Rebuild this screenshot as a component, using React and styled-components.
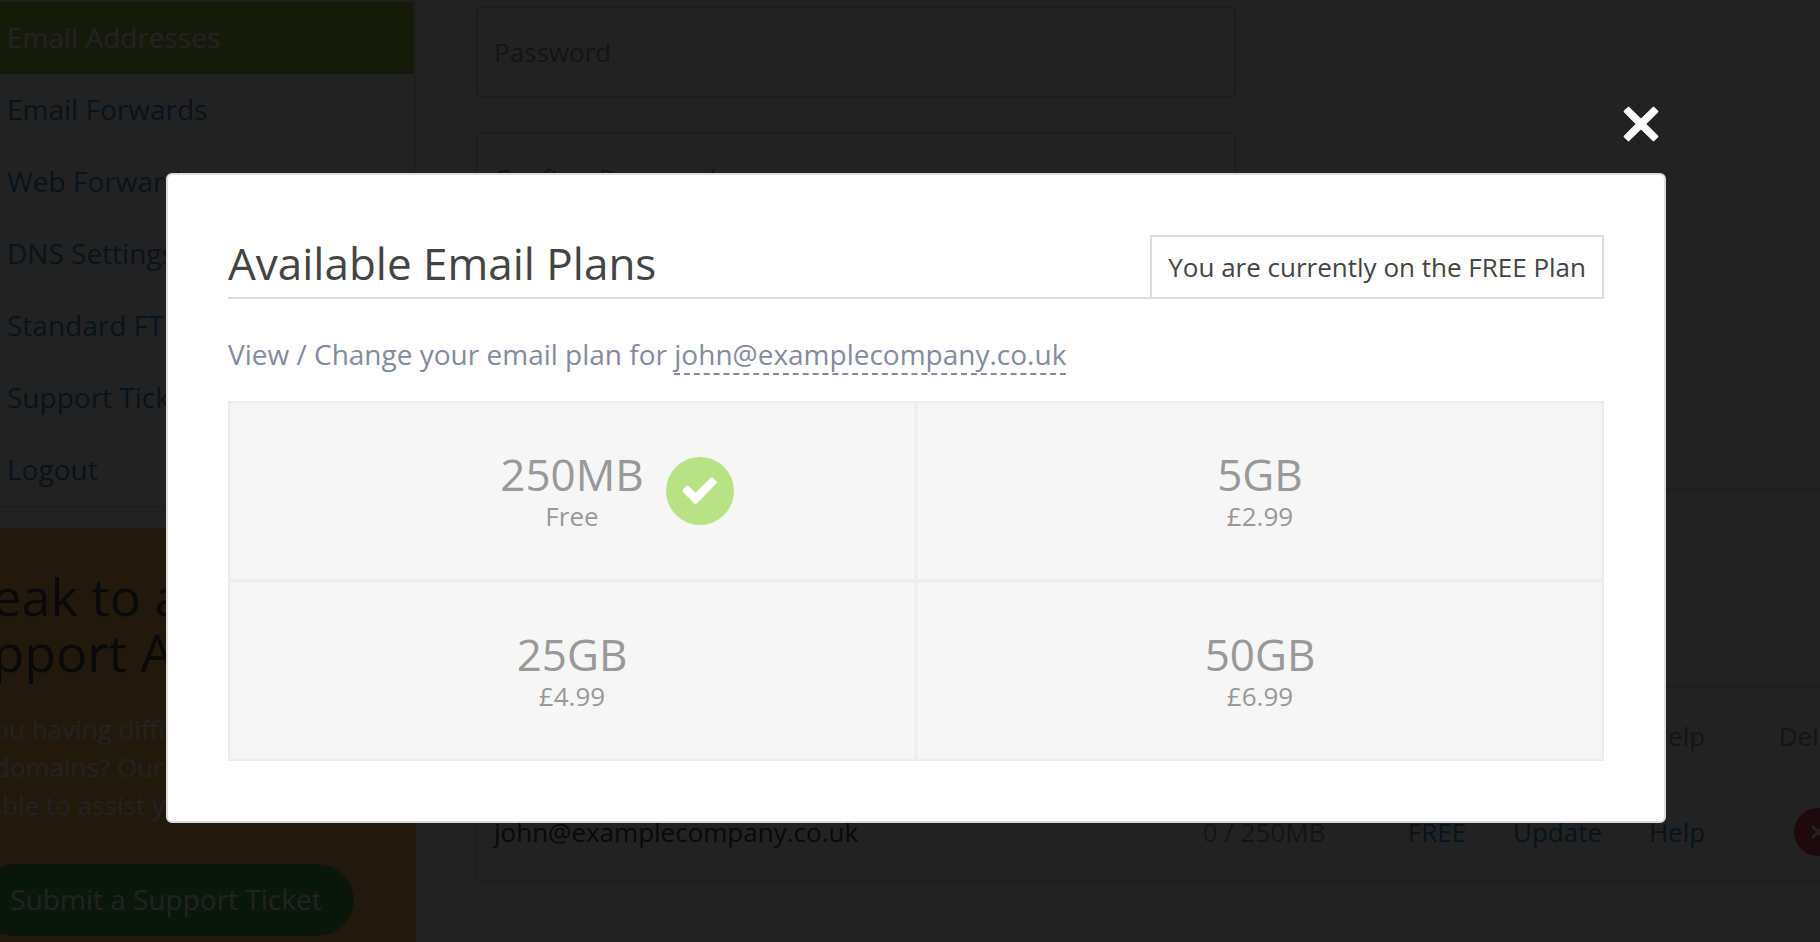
import React from "react";
import styled, { createGlobalStyle } from "styled-components";

const GlobalStyle = createGlobalStyle`
  *, *::before, *::after { box-sizing: border-box; }
  html, body { margin: 0; height: 100%; overflow: hidden; }
  body {
    background: #fff;
    color: #444;
    font-family: "Open Sans", "Noto Sans", sans-serif;
    font-size: 26px;
    line-height: 38px;
  }
  a { color: inherit; text-decoration: none; }
  button, input { font: inherit; }
`;

const Page = styled.div`
  display: flex;
  gap: 60px;
  margin: 0 -81px 0 -86px;
`;

const Sidebar = styled.aside`
  flex: 0 0 502px;
`;

const SideNav = styled.nav`
  margin-bottom: 20px;
  border: 2px solid #e6e6e6;
  border-left: 0;
`;

const NavLink = styled.a`
  display: block;
  padding: 16px 16px 18px 93px;
  font-size: 28px;
  color: ${(p) => (p.$active ? "#fff" : "#3c8cc4")};
  background: ${(p) => (p.$active ? "#a8c456" : "transparent")};
`;

const SupportCard = styled.section`
  display: flex;
  flex-direction: column;
  padding: 40px 16px 6px 18px;
  background: #febb61;
`;

const SupportTitle = styled.h2`
  margin: 0 0 30px;
  font-size: 52px;
  line-height: 56px;
  font-weight: 400;
`;

const SupportText = styled.p`
  margin: 0 0 40px;
  color: #fff;
`;

const TicketButton = styled.button`
  align-self: center;
  padding: 16px 32px 18px;
  border: 0;
  border-radius: 36px;
  background: #52ac4b;
  color: #fff;
  font-size: 28px;
  white-space: nowrap;
`;

const Main = styled.main`
  flex: 1;
  min-width: 0;
`;

const Form = styled.form`
  display: flex;
  flex-direction: column;
  gap: 34px;
  max-width: 760px;
  padding: 6px 0 264px;
`;

const Field = styled.input`
  width: 100%;
  height: 92px;
  padding: 0 16px;
  border: 2px solid #ddd;
  border-radius: 6px;
  background: #fff;
  &::placeholder { color: #999; opacity: 1; }
`;

const Divider = styled.hr`
  margin: 0 0 196px;
  border: 0;
  border-top: 2px solid #e6e6e6;
`;

const Mailboxes = styled.table`
  width: 100%;
  table-layout: fixed;
  border-collapse: collapse;
  border: 2px solid #e6e6e6;
  th, td {
    height: 97px;
    padding: 0 16px;
    font-weight: 400;
    text-align: center;
    white-space: nowrap;
  }
  th { background: #fafafa; color: #999; }
  th:first-child, td:first-child { text-align: left; }
`;

const Col = styled.col`
  width: ${(p) => p.$w};
`;

const Muted = styled.span`
  color: #999;
`;

const CellLink = styled.a`
  && { color: #3c8cc4; }
`;

const DeleteButton = styled.button`
  display: inline-flex;
  align-items: center;
  justify-content: center;
  width: 48px;
  height: 48px;
  padding: 0;
  border: 0;
  border-radius: 50%;
  background: #d14b70;
  vertical-align: middle;
`;

const Overlay = styled.div`
  position: fixed;
  inset: 0;
  display: flex;
  flex-direction: column;
  align-items: stretch;
  padding: 106px 154px 0 166px;
  background: rgba(0, 0, 0, 0.866);
`;

const CloseButton = styled.button`
  display: flex;
  align-self: flex-end;
  margin: 0 7px 31px 0;
  padding: 0;
  border: 0;
  background: none;
`;

const Dialog = styled.div`
  padding: 60px;
  border: 2px solid #ddd;
  border-radius: 6px;
  background: #fff;
`;

const DialogHeader = styled.header`
  display: flex;
  justify-content: space-between;
  height: 64px;
  border-bottom: 2px solid #ddd;
`;

const DialogTitle = styled.h1`
  margin: 0;
  font-size: 44px;
  line-height: 56px;
  font-weight: 400;
`;

const CurrentPlan = styled.div`
  height: 64px;
  padding: 11px 16px;
  border: 2px solid #ddd;
`;

const Intro = styled.p`
  margin: 36px 0 28px;
  font-size: 28px;
  color: #858b9e;
`;

const Account = styled.span`
  border-bottom: 2px dashed #858b9e;
`;

const PlanGrid = styled.div`
  display: grid;
  grid-template-columns: 1fr 1fr;
`;

const PlanButton = styled.button`
  display: flex;
  align-items: center;
  justify-content: center;
  height: 180px;
  padding: 0;
  border: 2px solid #eee;
  background: #f6f6f6;
  color: #999;
`;

const PlanLabel = styled.span`
  position: relative;
  display: flex;
  flex-direction: column;
  align-items: center;
  padding-top: 4px;
`;

const PlanSize = styled.span`
  font-size: 44px;
  line-height: 46px;
`;

const Tick = styled.span`
  position: absolute;
  top: 50%;
  left: 100%;
  display: flex;
  align-items: center;
  justify-content: center;
  width: 68px;
  height: 68px;
  margin: -34px 0 0 22px;
  border-radius: 50%;
  background: #b8e283;
`;

const navItems = [
  "Email Addresses",
  "Email Forwards",
  "Web Forwards",
  "DNS Settings",
  "Standard FTP",
  "Support Tickets",
  "Logout",
];

const plans = [
  { size: "250MB", price: "Free", current: true },
  { size: "5GB", price: "£2.99" },
  { size: "25GB", price: "£4.99" },
  { size: "50GB", price: "£6.99" },
];

const CrossIcon = ({ size, color }) => (
  <svg width={size} height={size} viewBox="0 0 36 36" aria-hidden="true">
    <path
      d="M6.2.9 18 12.6 29.800.9Q30.500.3 31.200.9L35.100 4.800Q35.700 5.500 35.100 6.200L23.400 18 35.100 29.800Q35.700 30.500 35.100 31.200L31.200 35.100Q30.500 35.700 29.800 35.100L18 23.400 6.200 35.100Q5.500 35.700 4.800 35.100L.9 31.200Q.3 30.500.9 29.800L12.600 18 .9 6.200Q.3 5.500.9 4.800L4.800.9Q5.500.3 6.200.9Z"
      fill={color}
    />
  </svg>
);

const TickIcon = () => (
  <svg width="36" height="28" viewBox="0 0 36 28" aria-hidden="true">
    <path
      d="M1.100 12.300 4.300 9.200Q5.500 8.200 6.700 9.200L13.500 15.800 28.600 1.100Q29.900 0 31.200 1.100L34.400 4.200Q35.400 5.300 34.400 6.500L14.800 26.400Q13.500 27.500 12.200 26.400L1.100 15.200Q0 13.800 1.100 12.300Z"
      fill="#fff"
    />
  </svg>
);

export default function App() {
  return (
    <>
      <GlobalStyle />
      <Page>
        <Sidebar>
          <SideNav>
            {navItems.map((item, i) => (
              <NavLink key={item} href="#" $active={i === 0}>
                {item}
              </NavLink>
            ))}
          </SideNav>
          <SupportCard>
            <SupportTitle>
              Speak to a
              <br />
              Support Agent
            </SupportTitle>
            <SupportText>
              Are you having difficulties with
              <br />
              your domains? Our support team
              <br />
              also able to assist you
            </SupportText>
            <TicketButton type="button">Submit a Support Ticket</TicketButton>
          </SupportCard>
        </Sidebar>
        <Main>
          <Form>
            <Field type="password" placeholder="Password" aria-label="Password" />
            <Field type="password" placeholder="Confirm Password" aria-label="Confirm Password" />
          </Form>
          <Divider />
          <Mailboxes>
            <colgroup>
              <Col />
              <Col $w="226px" />
              <Col $w="120px" />
              <Col $w="120px" />
              <Col $w="120px" />
              <Col $w="163px" />
            </colgroup>
            <thead>
              <tr>
                <th>Email</th>
                <th>Usage</th>
                <th>Plan</th>
                <th>Update</th>
                <th>Help</th>
                <th>Delete</th>
              </tr>
            </thead>
            <tbody>
              <tr>
                <td>john@examplecompany.co.uk</td>
                <td><Muted>0 / 250MB</Muted></td>
                <td><CellLink href="#">FREE</CellLink></td>
                <td><CellLink href="#">Update</CellLink></td>
                <td><CellLink href="#">Help</CellLink></td>
                <td>
                  <DeleteButton type="button" aria-label="Delete">
                    <CrossIcon size={14} color="#fff" />
                  </DeleteButton>
                </td>
              </tr>
            </tbody>
          </Mailboxes>
        </Main>
      </Page>
      <Overlay>
        <CloseButton type="button" aria-label="Close">
          <CrossIcon size={36} color="#fff" />
        </CloseButton>
        <Dialog role="dialog" aria-labelledby="plans-title">
          <DialogHeader>
            <DialogTitle id="plans-title">Available Email Plans</DialogTitle>
            <CurrentPlan>You are currently on the FREE Plan</CurrentPlan>
          </DialogHeader>
          <Intro>
            View / Change your email plan for <Account>john@examplecompany.co.uk</Account>
          </Intro>
          <PlanGrid>
            {plans.map((plan) => (
              <PlanButton key={plan.size} type="button">
                <PlanLabel>
                  <PlanSize>{plan.size}</PlanSize>
                  <span>{plan.price}</span>
                  {plan.current && (
                    <Tick>
                      <TickIcon />
                    </Tick>
                  )}
                </PlanLabel>
              </PlanButton>
            ))}
          </PlanGrid>
        </Dialog>
      </Overlay>
    </>
  );
}
